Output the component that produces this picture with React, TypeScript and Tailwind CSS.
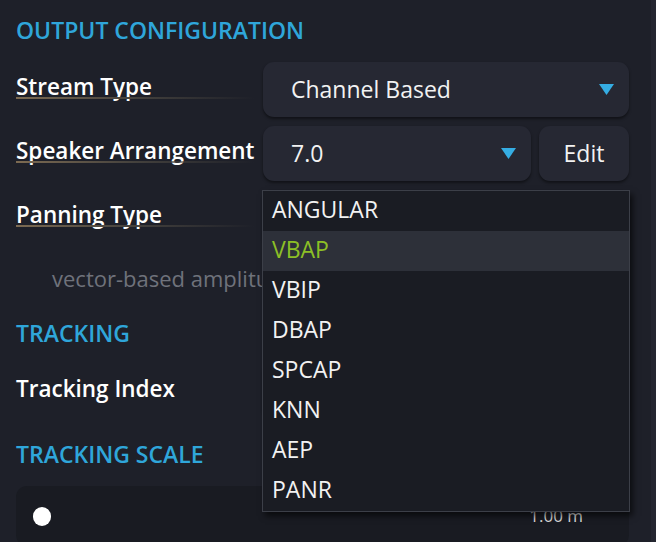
import { useState } from 'react'

const panningTypes = ['ANGULAR', 'VBAP', 'VBIP', 'DBAP', 'SPCAP', 'KNN', 'AEP', 'PANR']

function Caret() {
  return (
    <svg width="15" height="11" viewBox="0 0 15 11" className="shrink-0">
      <path d="M0 0 H15 L7.5 11 Z" fill="#35ade3" />
    </svg>
  )
}

function Label({ children, line = true }: { children: string; line?: boolean }) {
  return (
    <div className="w-[247px] shrink-0 flex flex-col mb-[2px]">
      <span className="text-[22.5px] font-semibold text-white leading-[18px]">{children}</span>
      {line && <div className="mt-px h-[2px] w-[238px] bg-gradient-to-r from-[#7d6b52] via-[#44413d] to-transparent" />}
    </div>
  )
}

function Select({ value, className = '' }: { value: string; className?: string }) {
  return (
    <div
      className={
        'h-[55px] rounded-[11px] bg-[#262833] shadow-[0_2px_3px_rgba(0,0,0,0.45)] flex items-center justify-between pl-[28px] pr-[15px] ' +
        className
      }
    >
      <span className="text-[23px] text-[#f2f2f2]">{value}</span>
      <Caret />
    </div>
  )
}

function Heading({ children }: { children: string }) {
  return <h2 className="text-[23px] font-semibold text-[#2fa6da] leading-7">{children}</h2>
}

export default function App() {
  const [selected] = useState('VBAP')

  return (
    <div
      className="relative w-[656px] h-[542px] overflow-hidden bg-[#1e2029] flex"
      style={{ fontFamily: '"Open Sans", "Noto Sans", sans-serif' }}
    >
      <div className="flex-1 flex flex-col pl-4 pr-[22px] pt-[16px]">
        <Heading>OUTPUT CONFIGURATION</Heading>

        <div className="mt-[18px] flex items-center">
          <Label>Stream Type</Label>
          <Select value="Channel Based" className="flex-1" />
        </div>

        <div className="mt-[9px] flex items-center">
          <Label>Speaker Arrangement</Label>
          <div className="flex-1 flex gap-2">
            <Select value="7.0" className="flex-1" />
            <button className="w-[90px] h-[55px] rounded-[11px] bg-[#262833] shadow-[0_2px_3px_rgba(0,0,0,0.45)] text-[23px] text-[#f2f2f2]">
              Edit
            </button>
          </div>
        </div>

        <div className="mt-[9px] flex items-center">
          <Label>Panning Type</Label>
          <Select value={selected} className="flex-1" />
        </div>

        <p className="mt-[19px] pl-9 text-[22px] text-[#6f727b] leading-7 whitespace-nowrap">vector-based amplitude panning</p>

        <div className="mt-[27px]">
          <Heading>TRACKING</Heading>
        </div>

        <div className="mt-[15px] flex items-center h-[55px]">
          <Label line={false}>Tracking Index</Label>
          <Select value="0" className="flex-1" />
        </div>

        <div className="mt-[23px]">
          <Heading>TRACKING SCALE</Heading>
        </div>

        <div className="mt-[18px] h-[60px] shrink-0 rounded-[11px] bg-[#191b22] flex items-center justify-between pl-[17px] pr-[46px]">
          <div className="w-[18px] h-[19px] rounded-full bg-white" />
          <span className="text-[17px] text-[#d9d9d9]">1.00 m</span>
        </div>
      </div>
      <div className="w-[5px] bg-[#242630]" />

      {/* open panning type menu */}
      <ul className="absolute left-[262px] top-[190px] w-[368px] border border-[#3c3f48] bg-[#1a1c23] shadow-[3px_4px_6px_rgba(0,0,0,0.6)]">
        {panningTypes.map((t) => (
          <li
            key={t}
            className={
              'h-10 flex items-center pl-[9px] pb-[3px] text-[23px] ' +
              (t === selected ? 'bg-[#2d3039] text-[#8cbf26]' : 'text-[#f2f2f2]')
            }
          >
            {t}
          </li>
        ))}
      </ul>
    </div>
  )
}
